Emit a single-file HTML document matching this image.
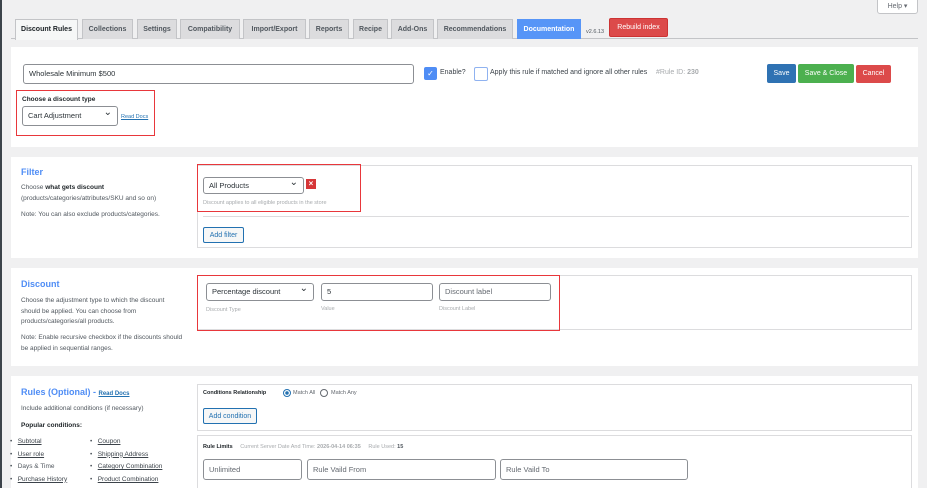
<!DOCTYPE html>
<html style="overflow:hidden;height:488px"><head><meta charset="utf-8"><style>
*{box-sizing:border-box;margin:0;padding:0}
body{width:927px;height:488px;overflow:hidden;background:#f0f0f1;font-family:"Liberation Sans",sans-serif;font-size:7px;color:#3c434a;position:relative}
.a{position:absolute}
.tab{position:absolute;top:19px;height:20px;background:#dcdcde;border:1px solid #c3c4c7;border-bottom:none;font-weight:bold;font-size:7px;color:#50575e;text-align:center;line-height:19px}
.panel{position:absolute;left:11px;width:907px;background:#fff}
.inp{position:absolute;border:1px solid #8c8f94;border-radius:3px;background:#fff;font-size:7.5px;color:#2c3338;padding-left:5px;line-height:17px}
.sel:after{content:"⌄";position:absolute;right:5px;top:-3px;font-size:10px}
.lbl{position:absolute;font-size:5.5px;color:#a7aaad}
.h{position:absolute;color:#4f8df5;font-weight:bold;font-size:9px}
.t{position:absolute;font-size:6.5px;color:#50575e;line-height:10.5px}
.box{position:absolute;border:1px solid #dcdcde;background:#fff}
.red{position:absolute;border:1.5px solid #e8373b}
.btn2{position:absolute;border:1px solid #2271b1;border-radius:2px;background:#f6f7f7;color:#2271b1;font-size:7px;text-align:center;line-height:15px}
u{color:#3c434a}
</style></head><body>
<div class="a" style="left:0;top:0;width:2px;height:488px;background:#3c434a"></div>
<div class="a" style="left:877px;top:-2px;width:41px;height:16px;background:#fff;border:1px solid #c3c4c7;border-radius:0 0 3px 3px;font-size:7px;color:#646970;text-align:center;line-height:15px">Help ▾</div>
<div class="a" style="left:11px;top:38px;width:907px;height:1px;background:#c3c4c7"></div>
<div class="tab" style="left:15px;width:63px;background:#f6f7f7;color:#1d2327;height:21px">Discount Rules</div>
<div class="tab" style="left:82px;width:51px">Collections</div>
<div class="tab" style="left:137px;width:40px">Settings</div>
<div class="tab" style="left:180px;width:60px">Compatibility</div>
<div class="tab" style="left:243px;width:63px">Import/Export</div>
<div class="tab" style="left:309px;width:40px">Reports</div>
<div class="tab" style="left:353px;width:35px">Recipe</div>
<div class="tab" style="left:391px;width:43px">Add-Ons</div>
<div class="tab" style="left:437px;width:76px">Recommendations</div>
<div class="tab" style="left:517px;width:64px;background:#5795f7;color:#fff;border-color:#5795f7">Documentation</div>
<div class="a" style="left:586px;top:29px;font-size:5.5px;color:#50575e">v2.6.13</div>
<div class="a" style="left:609px;top:18px;width:59px;height:19px;background:#dc4a4a;border:1px solid #c33;border-radius:2px;color:#fff;font-size:7px;text-align:center;line-height:17px">Rebuild index</div>

<div class="panel" style="top:47px;height:100px"></div>
<div class="inp" style="left:23px;top:64px;width:391px;height:20px;line-height:18px">Wholesale Minimum $500</div>
<div class="a" style="left:424px;top:67px;width:13px;height:13px;background:#4f8df5;border-radius:2px;color:#fff;font-size:8px;text-align:center;line-height:13px">✓</div>
<div class="a" style="left:440px;top:69px;font-size:7px">Enable?</div>
<div class="a" style="left:474px;top:67px;width:14px;height:14px;border:1px solid #8fb2f0;border-radius:2px;background:#fff"></div>
<div class="a" style="left:490px;top:69px;font-size:7px">Apply this rule if matched and ignore all other rules</div>
<div class="a" style="left:656px;top:69px;font-size:7px;color:#a7aaad">#Rule ID: <b>230</b></div>
<div class="a" style="left:767px;top:64px;width:29px;height:19px;background:#2f72b3;border-radius:2px;color:#fff;font-size:7px;text-align:center;line-height:19px">Save</div>
<div class="a" style="left:798px;top:64px;width:56px;height:19px;background:#4cb04f;border-radius:2px;color:#fff;font-size:7px;text-align:center;line-height:19px">Save &amp; Close</div>
<div class="a" style="left:856px;top:65px;width:35px;height:18px;background:#dc4a4a;border-radius:2px;color:#fff;font-size:7px;text-align:center;line-height:18px">Cancel</div>
<div class="red" style="left:16px;top:90px;width:139px;height:46px"></div>
<div class="a" style="left:22px;top:96px;font-size:6.5px;font-weight:bold;color:#1d2327">Choose a discount type</div>
<div class="inp sel" style="left:22px;top:106px;width:96px;height:20px;line-height:18px">Cart Adjustment</div>
<div class="a" style="left:121px;top:114px;font-size:5.5px;color:#2271b1;text-decoration:underline">Read Docs</div>

<div class="panel" style="top:157px;height:101px"></div>
<div class="h" style="left:21px;top:167px">Filter</div>
<div class="t" style="left:21px;top:183px">Choose <b style="color:#1d2327">what gets discount</b><br>(products/categories/attributes/SKU and so on)</div>
<div class="t" style="left:21px;top:210px">Note: You can also exclude products/categories.</div>
<div class="box" style="left:197px;top:165px;width:715px;height:83px"></div>
<div class="a" style="left:203px;top:216px;width:706px;height:1px;background:#dcdcde"></div>
<div class="red" style="left:197px;top:164px;width:164px;height:48px"></div>
<div class="inp sel" style="left:203px;top:177px;width:101px;height:17px;line-height:15px">All Products</div>
<div class="a" style="left:306px;top:179px;width:10px;height:10px;background:#d63638;color:#fff;font-size:8px;font-weight:bold;text-align:center;line-height:10px">×</div>
<div class="lbl" style="left:203px;top:200px">Discount applies to all eligible products in the store</div>
<div class="btn2" style="left:203px;top:227px;width:41px;height:16px">Add filter</div>

<div class="panel" style="top:268px;height:98px"></div>
<div class="h" style="left:21px;top:279px">Discount</div>
<div class="t" style="left:21px;top:296px">Choose the adjustment type to which the discount<br>should be applied. You can choose from<br>products/categories/all products.</div>
<div class="t" style="left:21px;top:333px">Note: Enable recursive checkbox if the discounts should<br>be applied in sequential ranges.</div>
<div class="box" style="left:197px;top:275px;width:715px;height:55px"></div>
<div class="red" style="left:197px;top:275px;width:363px;height:56px"></div>
<div class="inp sel" style="left:206px;top:283px;width:108px;height:18px;line-height:16px">Percentage discount</div>
<div class="inp" style="left:321px;top:283px;width:112px;height:18px;line-height:16px">5</div>
<div class="inp" style="left:439px;top:283px;width:112px;height:18px;line-height:16px;color:#646970">Discount label</div>
<div class="lbl" style="left:206px;top:307px">Discount Type</div>
<div class="lbl" style="left:321px;top:306px">Value</div>
<div class="lbl" style="left:439px;top:306px">Discount Label</div>

<div class="panel" style="top:376px;height:112px"></div>
<div class="h" style="left:21px;top:387px">Rules (Optional) - <span style="font-size:6px;color:#2271b1;text-decoration:underline">Read Docs</span></div>
<div class="t" style="left:21px;top:404px">Include additional conditions (if necessary)</div>
<div class="t" style="left:21px;top:421px;font-weight:bold;color:#1d2327">Popular conditions:</div>
<div class="t" style="left:10px;top:436px;line-height:12.5px">•&nbsp;&nbsp;&nbsp;<u>Subtotal</u><br>•&nbsp;&nbsp;&nbsp;<u>User role</u><br>•&nbsp;&nbsp;&nbsp;Days &amp; Time<br>•&nbsp;&nbsp;&nbsp;<u>Purchase History</u></div>
<div class="t" style="left:90px;top:436px;line-height:12.5px">•&nbsp;&nbsp;&nbsp;<u>Coupon</u><br>•&nbsp;&nbsp;&nbsp;<u>Shipping Address</u><br>•&nbsp;&nbsp;&nbsp;<u>Category Combination</u><br>•&nbsp;&nbsp;&nbsp;<u>Product Combination</u></div>
<div class="box" style="left:197px;top:384px;width:715px;height:47px"></div>
<div class="a" style="left:203px;top:390px;font-size:5.5px;font-weight:bold;color:#1d2327">Conditions Relationship</div>
<div class="a" style="left:283px;top:389px;width:8px;height:8px;border:1px solid #2271b1;border-radius:50%;background:radial-gradient(#2271b1 40%,#fff 45%)"></div>
<div class="a" style="left:293px;top:390px;font-size:5.5px;color:#646970">Match All</div>
<div class="a" style="left:320px;top:389px;width:8px;height:8px;border:1px solid #646970;border-radius:50%"></div>
<div class="a" style="left:331px;top:390px;font-size:5.5px;color:#646970">Match Any</div>
<div class="btn2" style="left:203px;top:408px;width:54px;height:16px">Add condition</div>
<div class="box" style="left:197px;top:435px;width:715px;height:53px;border-bottom:none"></div>
<div class="a" style="left:203px;top:444px;font-size:5.5px;color:#a7aaad"><b style="color:#1d2327">Rule Limits</b>&nbsp;&nbsp;&nbsp;&nbsp; Current Server Date And Time: <b>2026-04-14 06:35</b>&nbsp;&nbsp;&nbsp;&nbsp; Rule Used: <b style="color:#50575e">15</b></div>
<div class="inp" style="left:203px;top:459px;width:99px;height:21px;line-height:19px;color:#646970">Unlimited</div>
<div class="inp" style="left:307px;top:459px;width:189px;height:21px;line-height:19px;color:#646970">Rule Vaild From</div>
<div class="inp" style="left:500px;top:459px;width:188px;height:21px;line-height:19px;color:#646970">Rule Vaild To</div>
</body></html>
